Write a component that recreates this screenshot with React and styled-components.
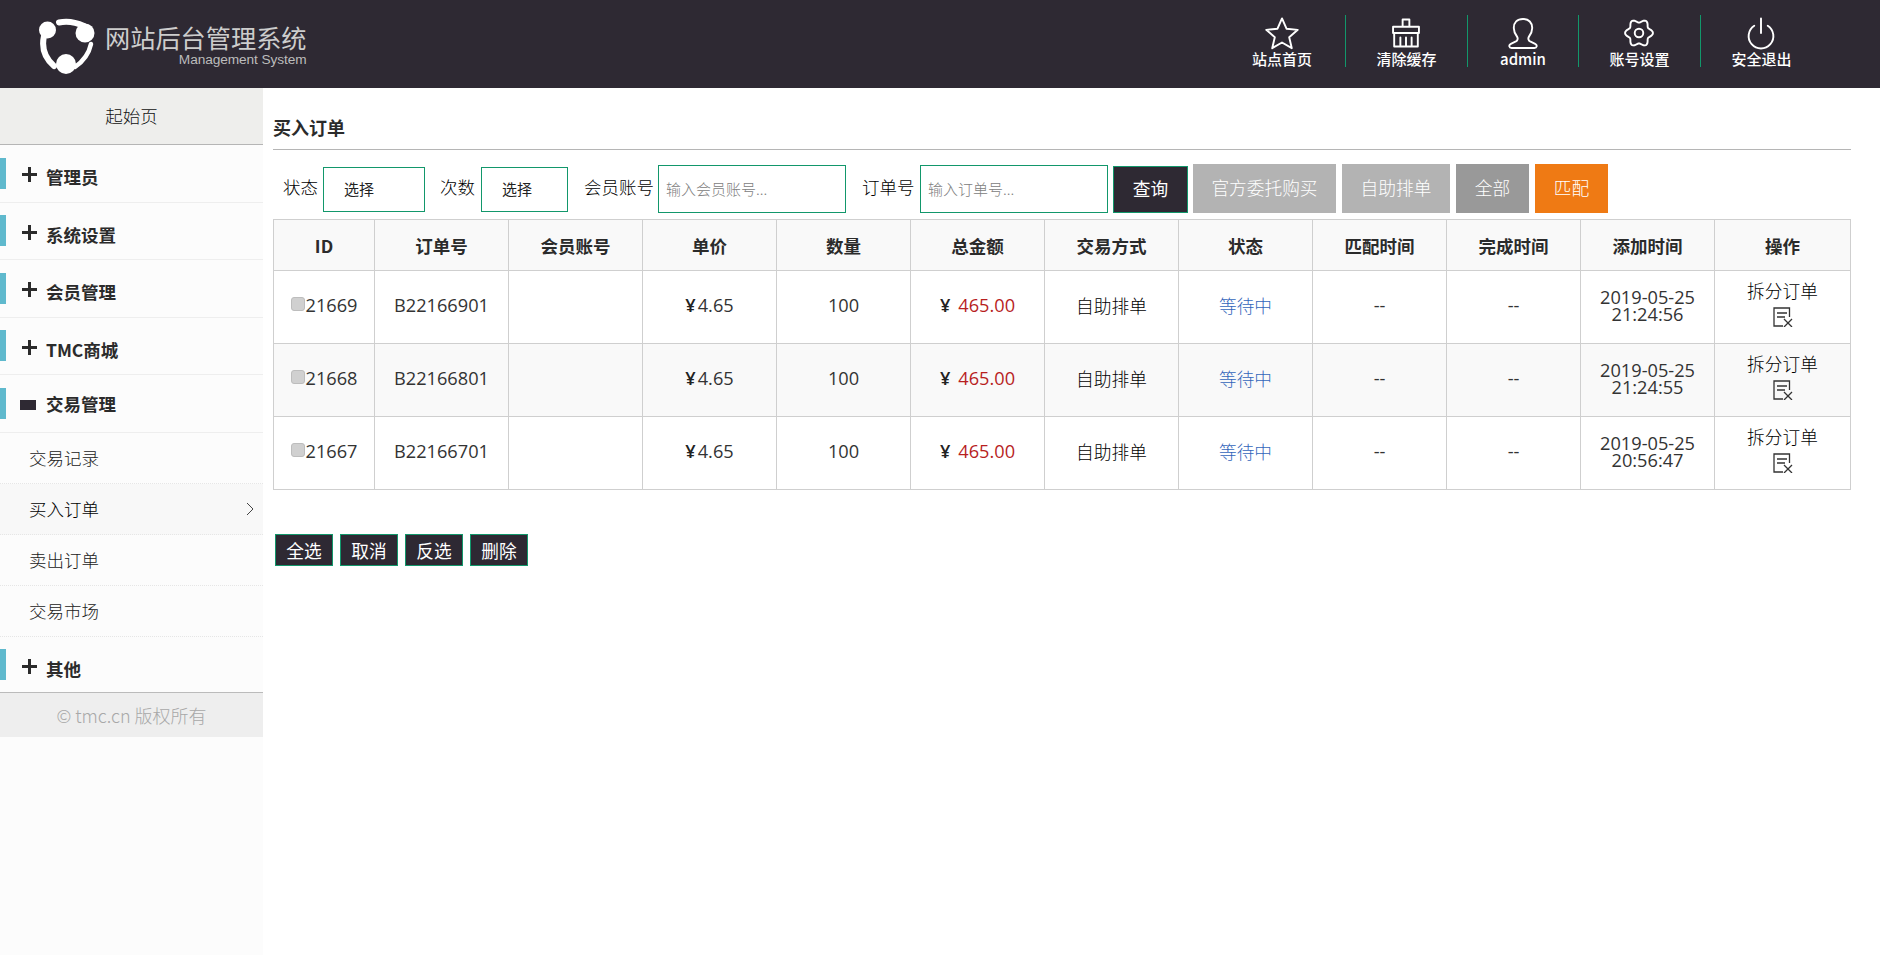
import React from "react";
import styled, { createGlobalStyle } from "styled-components";

const GlobalStyle = createGlobalStyle`
  html, body {
    margin: 0;
    padding: 0;
    background: #fff;
    font-family: "Noto Sans CJK SC", "Noto Sans", sans-serif;
    color: #222;
  }
  * {
    box-sizing: border-box;
  }
`;

const Page = styled.div`
  display: flex;
  flex-direction: column;
  height: 955px;
  overflow: hidden;
`;

const Header = styled.header`
  display: flex;
  justify-content: space-between;
  height: 88px;
  flex-shrink: 0;
  background: #2e2933;
`;

const Logo = styled.div`
  display: flex;
  align-items: flex-start;
  padding: 15px 0 0 38px;
`;

const LogoText = styled.div`
  display: flex;
  flex-direction: column;
  align-items: flex-end;
  margin: 7px 0 0 9px;
`;

const LogoTitle = styled.div`
  font-size: 25.2px;
  line-height: 30px;
  font-weight: 400;
  color: #cdcdcd;
  white-space: nowrap;
`;

const LogoSub = styled.div`
  font-family: "Liberation Sans", Arial, sans-serif;
  font-size: 13.7px;
  line-height: 15px;
  letter-spacing: -0.1px;
  color: #bcbcbc;
`;

const Nav = styled.nav`
  display: flex;
  align-items: flex-start;
  padding: 15px 58px 0 0;
`;

const NavItem = styled.div`
  display: flex;
  flex-direction: column;
  align-items: center;
  min-width: 111px;
  height: 52px;
  padding: 0 ${(p) => (p.$first ? 33 : 30.5)}px 0 30.5px;
  color: #fff;
  border-left: ${(p) => (p.$first ? "none" : "1px solid #12976b")};
  svg {
    display: block;
    flex-shrink: 0;
  }
`;

const NavLabel = styled.span`
  margin-top: -2px;
  font-size: 15px;
  line-height: 20px;
  font-weight: 500;
  white-space: nowrap;
`;

const Body = styled.div`
  display: flex;
  flex: 1;
  min-height: 0;
`;

const Sidebar = styled.aside`
  width: 263px;
  flex-shrink: 0;
  background: #fcfcfc;
`;

const StartTab = styled.div`
  display: flex;
  align-items: center;
  justify-content: center;
  height: 57px;
  padding-bottom: 2px;
  font-size: 17.5px;
  font-weight: 300;
  color: #111;
  background: #eeeeec;
  border-bottom: 1px solid #b5b5b5;
`;

const MenuHead = styled.div`
  display: flex;
  align-items: center;
  height: ${(p) => p.$height || 57.5}px;
  border-bottom: ${(p) => (p.$last ? "none" : "1px solid #eeeeee")};
`;

const Accent = styled.span`
  width: 6px;
  height: 31px;
  flex-shrink: 0;
  background: #5fb9cd;
`;

const MenuIcon = styled.span`
  display: flex;
  width: 20px;
  margin: ${(p) => (p.$low ? 5 : 3)}px 0 0 ${(p) => (p.$open ? 14 : 16)}px;
  svg {
    display: block;
  }
`;

const MenuLabel = styled.span`
  margin: ${(p) => (p.$open ? 1 : p.$low ? 10 : 8)}px 0 0 ${(p) => (p.$open ? 6 : 4)}px;
  font-size: 17.5px;
  line-height: 24px;
  font-weight: 700;
  color: #2b2b2b;
`;

const SubItem = styled.div`
  display: flex;
  align-items: center;
  justify-content: space-between;
  height: 51.1px;
  padding: 0 9px 0 29px;
  font-size: 17.5px;
  font-weight: 300;
  color: ${(p) => (p.$active ? "#000" : "#222")};
  background: ${(p) => (p.$active ? "#f8f8f8" : "transparent")};
  border-bottom: 1px dotted #e6e6e6;
`;

const Copyright = styled.div`
  display: flex;
  align-items: center;
  justify-content: center;
  height: 45px;
  font-size: 18px;
  font-weight: 300;
  color: #a8a8a8;
  background: #eeeeee;
  border-top: 1px solid #bbbbbb;
`;

const Main = styled.main`
  flex: 1;
  min-width: 0;
  padding: 0 29px 0 10px;
`;

const Title = styled.h2`
  height: 62px;
  margin: 0;
  padding-top: 26px;
  font-size: 18px;
  line-height: 26px;
  font-weight: 700;
  color: #2b2b2b;
  border-bottom: 1px solid #b5b5b5;
`;

const FilterRow = styled.div`
  display: flex;
  align-items: flex-end;
  height: 50px;
  margin-top: 13px;
  padding-left: 10px;
`;

const FilterLabel = styled.span`
  align-self: center;
  margin: 0 ${(p) => p.$gap || 4}px 4px ${(p) => p.$left || 0}px;
  font-size: 17.5px;
  font-weight: 300;
  color: #000;
  white-space: nowrap;
`;

const SelectBox = styled.div`
  display: flex;
  align-items: center;
  width: ${(p) => p.$width}px;
  height: 45px;
  margin-bottom: 1px;
  padding: 0 0 2px 20px;
  font-size: 15px;
  color: #222;
  background: #fff;
  border: 1px solid #12976b;
`;

const TextInput = styled.input`
  width: 188px;
  height: 48px;
  padding: 0 7px 2px;
  font-family: inherit;
  font-size: 15px;
  font-weight: 300;
  background: #fff;
  border: 1px solid #12976b;
  border-radius: 0;
  outline: none;
  &::placeholder {
    color: #808080;
    opacity: 1;
  }
`;

const SearchButton = styled.button`
  width: 75px;
  height: 47px;
  margin-left: 5px;
  padding: 0 0 4px;
  font-family: inherit;
  font-size: 17.7px;
  font-weight: 400;
  color: #fff;
  background: #2e2933;
  border: 1px solid #12976b;
`;

const ActionButton = styled.button`
  width: ${(p) => p.$width}px;
  height: 49px;
  margin-left: ${(p) => p.$left || 6}px;
  padding: 0 0 4px;
  font-family: inherit;
  font-size: 17.7px;
  font-weight: 300;
  color: #fff;
  background: ${(p) => p.$bg};
  border: none;
`;

const Table = styled.table`
  width: 1578px;
  margin-top: 6px;
  table-layout: fixed;
  border-collapse: collapse;
`;

const Col = styled.col`
  width: ${(p) => p.$width || "auto"};
`;

const Th = styled.th`
  height: 51px;
  padding: 0;
  font-size: 17.5px;
  font-weight: 700;
  color: #2b2b2b;
  background: #f9f9f9;
  border: 1px solid #cfcfcf;
`;

const Row = styled.tr`
  background: ${(p) => (p.$alt ? "#f9f9f9" : "#fff")};
`;

const Td = styled.td`
  height: 73px;
  padding: 0 0 4px;
  font-family: "Open Sans", "Noto Sans CJK SC", sans-serif;
  font-size: ${(p) => (p.$num ? 18.2 : 17.7)}px;
  font-weight: ${(p) => (p.$num ? 400 : 300)};
  text-align: center;
  color: ${(p) => p.$color || (p.$num ? "#333" : "#000")};
  border: 1px solid #cfcfcf;
`;

const CheckBox = styled.input`
  appearance: none;
  display: inline-block;
  width: 14px;
  height: 14px;
  margin: 0 1px 0 0;
  vertical-align: 1px;
  background: #d0d0d0;
  border: 1px solid #bdbdbd;
  border-radius: 3px;
`;

const Yen = styled.span`
  margin-right: ${(p) => p.$gap || 2}px;
  font-weight: 600;
  color: #222;
`;

const Money = styled.span`
  color: #b81f1f;
`;

const DateText = styled.div`
  margin-top: 1px;
  line-height: 17px;
`;

const OpCell = styled.div`
  display: flex;
  flex-direction: column;
  align-items: center;
  gap: 4px;
  line-height: 24px;
  margin-top: -5px;
`;

const BottomBar = styled.div`
  display: flex;
  gap: 7px;
  margin: 44px 0 0 2px;
`;

const SmallButton = styled.button`
  width: 58px;
  height: 32px;
  padding: 0;
  font-family: inherit;
  font-size: 17.7px;
  font-weight: 400;
  color: #fff;
  background: #2e2933;
  border: 1px solid #12976b;
`;

const LogoMark = () => (
  <svg width="58" height="60" viewBox="38 15 58 60">
    <g fill="#fff">
      <circle cx="47.5" cy="30" r="8.5" />
      <circle cx="85" cy="33" r="9.500" />
      <circle cx="66" cy="64" r="10" />
    </g>
    <g fill="none" stroke="#fff" strokeLinecap="round">
      <path d="M59 22.500 Q71 20 84 26" strokeWidth="6" />
      <path d="M44 36 Q40 54 54 66" strokeWidth="6" />
      <path d="M91 44 Q88 58 75 67" strokeWidth="4.500" />
    </g>
  </svg>
);

const iconProps = {
  width: 36,
  height: 36,
  viewBox: "0 0 32 32",
  fill: "none",
  stroke: "#fff",
  strokeWidth: 1.7,
  strokeLinejoin: "round",
  strokeLinecap: "round",
};

const StarIcon = () => (
  <svg {...iconProps}>
    <path d="M16 3l4 9.200 10 1-7.600 6.500 2.300 9.800-8.700-5.100-8.700 5.100 2.300-9.800L2 13.200l10-1z" />
  </svg>
);

const BroomIcon = () => (
  <svg {...iconProps}>
    <path d="M13 10.500V4h6v6.500M4.500 10.500h23V16h-23zM5.500 16v12h21V16M11 28v-8M16 28v-8M21 28v-8" />
  </svg>
);

const UserIcon = () => (
  <svg {...iconProps}>
    <path d="M16 3.500c-5.200 0-8.200 3.400-8.200 8 0 3.500 1.600 5.900 2.900 7.700 1 1.500.6 3.500-1 4.300l-4.500 2.100c-2.100 1-1.700 3.700.7 3.700h20.200c2.400 0 2.800-2.700.7-3.700l-4.500-2.100c-1.600-.8-2-2.800-1-4.300 1.300-1.800 2.900-4.200 2.900-7.700 0-4.600-3-8-8.200-8z" />
  </svg>
);

const gearPath = () => {
  const pts = [];
  for (let i = 0; i < 72; i++) {
    const a = (i / 72) * Math.PI * 2;
    const r = 10.8 + 1.6 * Math.cos(6 * a);
    pts.push(`${(16 + r * Math.cos(a)).toFixed(2)} ${(16 + r * Math.sin(a)).toFixed(2)}`);
  }
  return `M${pts.join("L")}Z`;
};

const GearIcon = () => (
  <svg {...iconProps}>
    <path d={gearPath()} />
    <circle cx="16" cy="16" r="3.800" />
  </svg>
);

const PowerIcon = () => (
  <svg {...iconProps}>
    <path d="M16 3v13M10 9.500a11 11 0 1 0 12 0" />
  </svg>
);

const PlusIcon = () => (
  <svg width="15" height="15" viewBox="0 0 15 15">
    <path d="M7.500 0v15M0 7.500h15" stroke="#2b2b2b" strokeWidth="3" />
  </svg>
);

const DashIcon = () => (
  <svg width="16" height="10" viewBox="0 0 16 10">
    <rect width="16" height="10" fill="#2e2933" />
  </svg>
);

const Chevron = () => (
  <svg width="8" height="14" viewBox="0 0 8 14">
    <path d="M1 1l6 6-6 6" fill="none" stroke="#444" strokeWidth="1" />
  </svg>
);

const SplitIcon = () => (
  <svg width="20" height="20" viewBox="0 0 20 20" fill="none" stroke="#333" strokeWidth="1.300">
    <path d="M16.500 10V1H1v18h9M4 6h10M4 10h8M11 12l8 8M19 12l-8 8" />
  </svg>
);

const navItems = [
  { label: "站点首页", icon: <StarIcon /> },
  { label: "清除缓存", icon: <BroomIcon /> },
  { label: "admin", icon: <UserIcon /> },
  { label: "账号设置", icon: <GearIcon /> },
  { label: "安全退出", icon: <PowerIcon /> },
];

const subMenu = ["交易记录", "买入订单", "卖出订单", "交易市场"];

const columns = ["ID", "订单号", "会员账号", "单价", "数量", "总金额", "交易方式", "状态", "匹配时间", "完成时间", "添加时间", "操作"];

const orders = [
  { id: 21669, no: "B22166901", date: "2019-05-25", time: "21:24:56" },
  { id: 21668, no: "B22166801", date: "2019-05-25", time: "21:24:55" },
  { id: 21667, no: "B22166701", date: "2019-05-25", time: "20:56:47" },
];

const colWidth = (i) => {
  if (i === 0) return "101px";
  if (i === columns.length - 1) return "136px";
  return undefined;
};

const MenuGroup = ({ label }) => (
  <MenuHead>
    <Accent />
    <MenuIcon>
      <PlusIcon />
    </MenuIcon>
    <MenuLabel>{label}</MenuLabel>
  </MenuHead>
);

const App = () => (
  <Page>
    <GlobalStyle />
    <Header>
      <Logo>
        <LogoMark />
        <LogoText>
          <LogoTitle>网站后台管理系统</LogoTitle>
          <LogoSub>Management System</LogoSub>
        </LogoText>
      </Logo>
      <Nav>
        {navItems.map((item, i) => (
          <NavItem key={item.label} $first={i === 0}>
            {item.icon}
            <NavLabel>{item.label}</NavLabel>
          </NavItem>
        ))}
      </Nav>
    </Header>
    <Body>
      <Sidebar>
        <StartTab>起始页</StartTab>
        <MenuGroup label="管理员" />
        <MenuGroup label="系统设置" />
        <MenuGroup label="会员管理" />
        <MenuGroup label="TMC商城" />
        <MenuHead>
          <Accent />
          <MenuIcon $open>
            <DashIcon />
          </MenuIcon>
          <MenuLabel $open>交易管理</MenuLabel>
        </MenuHead>
        {subMenu.map((name) => (
          <SubItem key={name} $active={name === "买入订单"}>
            {name}
            {name === "买入订单" && <Chevron />}
          </SubItem>
        ))}
        <MenuHead $height={55} $last>
          <Accent />
          <MenuIcon $low>
            <PlusIcon />
          </MenuIcon>
          <MenuLabel $low>其他</MenuLabel>
        </MenuHead>
        <Copyright>© tmc.cn 版权所有</Copyright>
      </Sidebar>
      <Main>
        <Title>买入订单</Title>
        <FilterRow>
          <FilterLabel $gap={5}>状态</FilterLabel>
          <SelectBox $width={102}>选择</SelectBox>
          <FilterLabel $left={15} $gap={6}>次数</FilterLabel>
          <SelectBox $width={87}>选择</SelectBox>
          <FilterLabel $left={16}>会员账号</FilterLabel>
          <TextInput placeholder="输入会员账号..." />
          <FilterLabel $left={16} $gap={5.5}>订单号</FilterLabel>
          <TextInput placeholder="输入订单号..." />
          <SearchButton>查询</SearchButton>
          <ActionButton $width={143} $bg="#b3b3b3" $left={5}>官方委托购买</ActionButton>
          <ActionButton $width={108} $bg="#b3b3b3">自助排单</ActionButton>
          <ActionButton $width={73} $bg="#999999">全部</ActionButton>
          <ActionButton $width={73} $bg="#ef7a14">匹配</ActionButton>
        </FilterRow>
        <Table>
          <colgroup>
            {columns.map((c, i) => (
              <Col key={c} $width={colWidth(i)} />
            ))}
          </colgroup>
          <thead>
            <tr>
              {columns.map((c) => (
                <Th key={c}>{c}</Th>
              ))}
            </tr>
          </thead>
          <tbody>
            {orders.map((o, i) => (
              <Row key={o.id} $alt={i === 1}>
                <Td $num>
                  <CheckBox type="checkbox" />
                  {o.id}
                </Td>
                <Td $num>{o.no}</Td>
                <Td />
                <Td $num>
                  <Yen>¥</Yen>4.65
                </Td>
                <Td $num>100</Td>
                <Td $num>
                  <Yen $gap={8}>¥</Yen>
                  <Money>465.00</Money>
                </Td>
                <Td>自助排单</Td>
                <Td $color="#3366bb">等待中</Td>
                <Td $num>--</Td>
                <Td $num>--</Td>
                <Td $num>
                  <DateText>
                    {o.date}
                    <br />
                    {o.time}
                  </DateText>
                </Td>
                <Td>
                  <OpCell>
                    拆分订单
                    <SplitIcon />
                  </OpCell>
                </Td>
              </Row>
            ))}
          </tbody>
        </Table>
        <BottomBar>
          <SmallButton>全选</SmallButton>
          <SmallButton>取消</SmallButton>
          <SmallButton>反选</SmallButton>
          <SmallButton>删除</SmallButton>
        </BottomBar>
      </Main>
    </Body>
  </Page>
);

export default App;
